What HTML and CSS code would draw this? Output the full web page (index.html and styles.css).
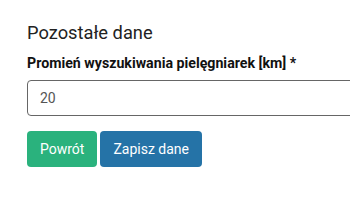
FILE: index.html
```html
<!DOCTYPE html>
<html lang="pl">

<head>
  <meta charset="UTF-8">
  <title>Pozostałe dane</title>
  <link rel="stylesheet" href="styles.css">
</head>

<body>
  <div class="container">
    <h3 class="section-title">Pozostałe dane</h3>

    <div class="form-group">
      <label class="form-label" for="radius">Promień wyszukiwania pielęgniarek [km] *</label>
      <input class="form-input" id="radius" type="text" value="20">
    </div>

    <div class="button-row">
      <button class="button button-back">Powrót</button>
      <button class="button button-save">Zapisz dane</button>
    </div>
  </div>
</body>

</html>
```

FILE: styles.css
```css
body {
  margin: 0;
  padding: 0;
  background-color: #fff;
  font-family: Roboto, "Liberation Sans", sans-serif;
  color: #222;
  overflow: hidden;
}

.container {
  padding: 22px 0 0 27px;
  width: 420px;
}

.section-title {
  margin: 0 0 10px;
  font-size: 18.3px;
  font-weight: normal;
  line-height: 22px;
}

.form-group {
  display: flex;
  flex-direction: column;
  gap: 8px;
}

.form-label {
  font-size: 14.2px;
  font-weight: bold;
  line-height: 18px;
  color: #111;
}

.form-input {
  box-sizing: border-box;
  width: 100%;
  height: 36px;
  padding: 0 12px;
  border: 1px solid #666;
  border-radius: 4px;
  font-family: inherit;
  font-size: 14px;
  color: #555;
  outline: none;
}

.button-row {
  display: flex;
  gap: 3px;
  margin-top: 15px;
}

.button {
  height: 36px;
  padding: 0 13px;
  border: none;
  border-radius: 4px;
  color: white;
  font-family: inherit;
  font-size: 14px;
  cursor: pointer;
}

.button-back {
  background-color: #2ab27d;
}

.button-save {
  background-color: #2573a7;
}
```
